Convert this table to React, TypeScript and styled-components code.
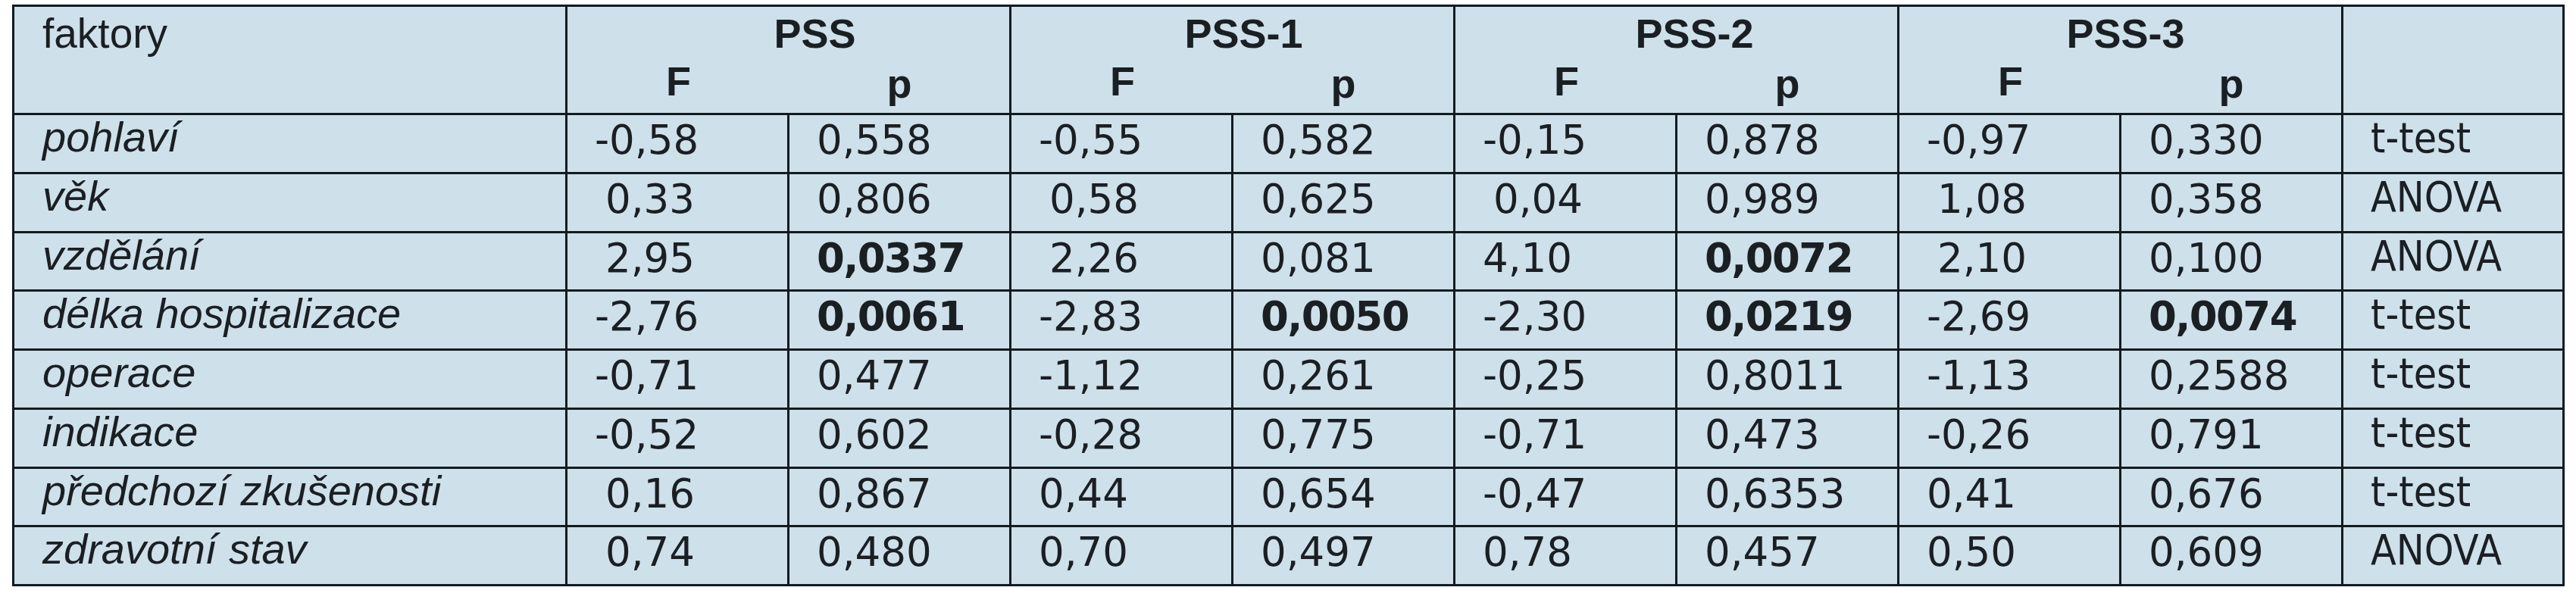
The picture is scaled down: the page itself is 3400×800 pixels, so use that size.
import React from "react";
import styled, { createGlobalStyle, css } from "styled-components";

const LINE = "#121b20";
const BG = "#cee0ea";
const INK = "#1a1f23";

const GlobalStyle = createGlobalStyle`
  html, body {
    margin: 0;
    padding: 0;
    background: #ffffff;
  }
  body {
    width: 3400px;
    height: 800px;
    overflow: hidden;
  }
`;

const Page = styled.main`
  padding: 6px 0 0 16px;
`;

const Table = styled.div`
  display: grid;
  grid-template-columns: 730px repeat(8, 293px) 289px;
  grid-template-rows: 71px 72px repeat(7, 77.75px) 74.75px;
  width: max-content;
  border: 3px solid ${LINE};
  background: ${BG};
  color: ${INK};
`;

type Edge = { $right?: boolean; $bottom?: boolean };

const edges = css<Edge>`
  box-sizing: border-box;
  border-right: ${(p) => (p.$right ? `3px solid ${LINE}` : "0")};
  border-bottom: ${(p) => (p.$bottom ? `3px solid ${LINE}` : "0")};
  white-space: nowrap;
`;

const FactorHead = styled.div<Edge>`
  ${edges};
  grid-row: 1 / span 2;
  grid-column: 1;
  padding: 8px 0 0 37px;
  font-family: "Liberation Sans", Arial, sans-serif;
  font-size: 55px;
  line-height: 55px;
`;

const GroupHead = styled.div<Edge & { $shift: number }>`
  ${edges};
  grid-row: 1;
  grid-column: span 2;
  padding: 8px 0 0 ${(p) => p.$shift * 2}px;
  text-align: center;
  font-family: "Liberation Sans", Arial, sans-serif;
  font-weight: 700;
  font-size: 54px;
  line-height: 54px;
`;

const SubHead = styled.div<Edge & { $drop?: number }>`
  ${edges};
  grid-row: 2;
  padding-top: ${(p) => p.$drop ?? 0}px;
  text-align: center;
  font-family: "Liberation Sans", Arial, sans-serif;
  font-weight: 700;
  font-size: 54px;
  line-height: 54px;
`;

const MethodHead = styled.div<Edge>`
  ${edges};
  grid-row: 1 / span 2;
  grid-column: 10;
`;

const LabelCell = styled.div<Edge>`
  ${edges};
  padding: 1px 0 0 37px;
  font-family: "Liberation Sans", Arial, sans-serif;
  font-style: italic;
  font-size: 56px;
  line-height: 56px;
`;

const NumCell = styled.div<Edge & { $bold?: boolean; $lead?: boolean }>`
  ${edges};
  padding: 6px 0 0 ${(p) => (p.$lead ? 50 : 36)}px;
  font-family: "DejaVu Sans", sans-serif;
  font-size: 53px;
  line-height: 53px;
  font-weight: ${(p) => (p.$bold ? 700 : 400)};
  letter-spacing: ${(p) => (p.$bold ? "-1.6px" : "0")};
`;

const MethodCell = styled.div<Edge>`
  ${edges};
  padding: 3px 0 0 36px;
  font-family: "DejaVu Sans Condensed", "DejaVu Sans", sans-serif;
  font-stretch: semi-condensed;
  font-size: 55px;
  line-height: 55px;
`;

type Row = { label: string; values: string[]; method: string };

// "*" marks a significant (bold) value, "_" marks a value set in by a figure space
const rows: Row[] = [
  { label: "pohlaví", values: ["-0,58", "0,558", "-0,55", "0,582", "-0,15", "0,878", "-0,97", "0,330"], method: "t-test" },
  { label: "věk", values: ["_0,33", "0,806", "_0,58", "0,625", "_0,04", "0,989", "_1,08", "0,358"], method: "ANOVA" },
  { label: "vzdělání", values: ["_2,95", "*0,0337", "_2,26", "0,081", "4,10", "*0,0072", "_2,10", "0,100"], method: "ANOVA" },
  { label: "délka hospitalizace", values: ["-2,76", "*0,0061", "-2,83", "*0,0050", "-2,30", "*0,0219", "-2,69", "*0,0074"], method: "t-test" },
  { label: "operace", values: ["-0,71", "0,477", "-1,12", "0,261", "-0,25", "0,8011", "-1,13", "0,2588"], method: "t-test" },
  { label: "indikace", values: ["-0,52", "0,602", "-0,28", "0,775", "-0,71", "0,473", "-0,26", "0,791"], method: "t-test" },
  { label: "předchozí zkušenosti", values: ["_0,16", "0,867", "0,44", "0,654", "-0,47", "0,6353", "0,41", "0,676"], method: "t-test" },
  { label: "zdravotní stav", values: ["_0,74", "0,480", "0,70", "0,497", "0,78", "0,457", "0,50", "0,609"], method: "ANOVA" },
];

const groups: { name: string; shift: number }[] = [
  { name: "PSS", shift: 35 },
  { name: "PSS-1", shift: 15 },
  { name: "PSS-2", shift: 24 },
  { name: "PSS-3", shift: 7 },
];

export default function App() {
  return (
    <>
      <GlobalStyle />
      <Page>
        <Table>
          <FactorHead $right $bottom>faktory</FactorHead>
          {groups.map((g) => (
            <GroupHead key={g.name} $right $shift={g.shift}>
              {g.name}
            </GroupHead>
          ))}
          <MethodHead $bottom />
          {groups.map((g) => (
            <React.Fragment key={g.name + "-sub"}>
              <SubHead $bottom>F</SubHead>
              <SubHead $bottom $right $drop={3}>p</SubHead>
            </React.Fragment>
          ))}
          {rows.map((r, i) => {
            const last = i === rows.length - 1;
            return (
              <React.Fragment key={r.label}>
                <LabelCell $right $bottom={!last}>{r.label}</LabelCell>
                {r.values.map((v, j) => {
                  const bold = v.startsWith("*");
                  const lead = v.startsWith("_");
                  const text = bold || lead ? v.slice(1) : v;
                  return (
                    <NumCell key={j} $right $bottom={!last} $bold={bold} $lead={lead}>
                      {text}
                    </NumCell>
                  );
                })}
                <MethodCell $bottom={!last}>{r.method}</MethodCell>
              </React.Fragment>
            );
          })}
        </Table>
      </Page>
    </>
  );
}
